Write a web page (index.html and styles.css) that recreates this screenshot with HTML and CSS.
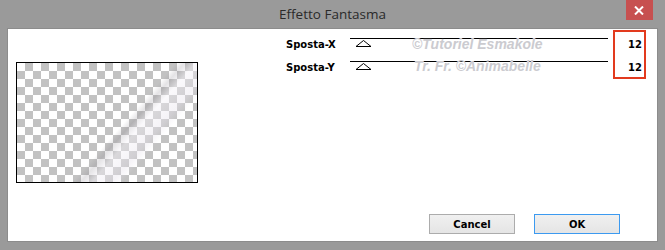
FILE: index.html
```html
<!DOCTYPE html>
<html>
<head>
  <meta charset="UTF-8">
  <title>Effetto Fantasma</title>
  <link rel="stylesheet" href="styles.css">
</head>
<body>
  <div class="window">
    <div class="title-bar">
      <span class="spacer"></span>
      <span class="title">Effetto Fantasma</span>
      <button class="x-icon">
        <svg width="10" height="9" viewBox="0 0 10 9"><path d="M1 0.5 L9 8.5 M9 0.5 L1 8.5" stroke="#fff" stroke-width="2"/></svg>
      </button>
    </div>

    <div class="client">
      <div class="topRow">
        <div class="preview"></div>

        <div class="params">
          <div class="sliders">
            <div class="sliderRow">
              <span class="label">Sposta-X</span>
              <div class="track">
                <svg class="thumb" width="17" height="7" viewBox="0 0 17 7"><polygon points="8.5,0.5 1,6.5 16,6.5" fill="#fff" stroke="#000" stroke-width="1"/></svg>
              </div>
            </div>
            <div class="sliderRow">
              <span class="label">Sposta-Y</span>
              <div class="track">
                <svg class="thumb" width="17" height="7" viewBox="0 0 17 7"><polygon points="8.5,0.5 1,6.5 16,6.5" fill="#fff" stroke="#000" stroke-width="1"/></svg>
              </div>
            </div>
          </div>
          <div class="values">
            <span>12</span>
            <span>12</span>
          </div>
        </div>
      </div>

      <!-- watermark over the sliders -->
      <div class="watermark">
        <span>©Tutoriel Esmakole</span>
        <span>Tr. Fr. ©Animabelle</span>
      </div>

      <div class="buttons">
        <button class="btn">Cancel</button>
        <button class="btn btnDefault">OK</button>
      </div>
    </div>
  </div>
</body>
</html>
```

FILE: styles.css
```css
body {
  margin: 0;
  padding: 0;
  overflow: hidden;
  background: #9a9a9a;
  font-family: "DejaVu Sans", sans-serif;
}

.window {
  width: 665px;
  height: 250px;
  display: flex;
  flex-direction: column;
}

.title-bar {
  height: 29px;
  display: flex;
  align-items: flex-start;
  justify-content: space-between;
  padding: 0 12px;
}

.spacer {
  width: 27px;
}

.title {
  font-family: "Open Sans", sans-serif;
  font-size: 13.5px;
  color: #2a2a2a;
  line-height: 29px;
}

.x-icon {
  width: 27px;
  height: 20px;
  border: none;
  padding: 0;
  background: #c75050;
  display: flex;
  align-items: center;
  justify-content: center;
}

.client {
  position: relative;
  flex: 1;
  margin: 0 8px 9px 8px;
  background: #fff;
  box-shadow: 0 0 0 1px #8c8c8c;
  display: flex;
  flex-direction: column;
}

.topRow {
  display: flex;
  align-items: flex-start;
}

.preview {
  margin: 33px 0 0 8px;
  width: 180px;
  height: 119px;
  border: 1px solid #000;
  background:
    linear-gradient(131deg, transparent 56%, rgba(120, 115, 125, 0.2) 59%, rgba(245, 242, 248, 0.45) 63%, rgba(230, 225, 235, 0.4) 70%, transparent 74%),
    repeating-conic-gradient(#c2c2c2 0 25%, #fff 0 50%) 0 0 / 16px 16px;
}

.params {
  display: flex;
  align-items: flex-start;
  margin-left: 88px;
}

.sliders {
  padding-top: 4px;
}

.sliderRow {
  display: flex;
  align-items: flex-start;
  height: 23px;
}

.label {
  width: 64px;
  font-size: 10px;
  font-weight: bold;
  line-height: 23px;
  color: #000;
}

.track {
  width: 258px;
  margin-top: 5px;
  border-top: 1px solid #000;
}

.thumb {
  display: block;
  margin: 1px 0 0 5px;
}

.values {
  margin: 1px 0 0 5px;
  width: 29px;
  height: 44px;
  border: 2px solid #e23a1e;
  padding-top: 1px;
  display: flex;
  flex-direction: column;
  align-items: flex-end;
}

.values span {
  line-height: 23px;
  font-size: 10px;
  font-weight: bold;
  padding-right: 2px;
}

.watermark {
  position: absolute;
  left: 404px;
  top: 4px;
  display: flex;
  flex-direction: column;
  align-items: center;
  font-family: "Liberation Sans", sans-serif;
  font-style: italic;
  font-weight: bold;
  font-size: 14px;
  line-height: 22px;
  color: #cbcbd0;
  text-shadow: 0 0 1px #fff;
}

.buttons {
  margin-top: auto;
  display: flex;
  justify-content: flex-end;
  gap: 19px;
  padding: 0 37px 7px 0;
}

.btn {
  width: 86px;
  height: 20px;
  padding: 0;
  font-family: "DejaVu Sans", sans-serif;
  font-size: 10px;
  font-weight: bold;
  color: #000;
  border: 1px solid #acacac;
  background: linear-gradient(to bottom, #f0f0f0, #e5e5e5);
}

.btnDefault {
  border-color: #3c9af0;
}
```
